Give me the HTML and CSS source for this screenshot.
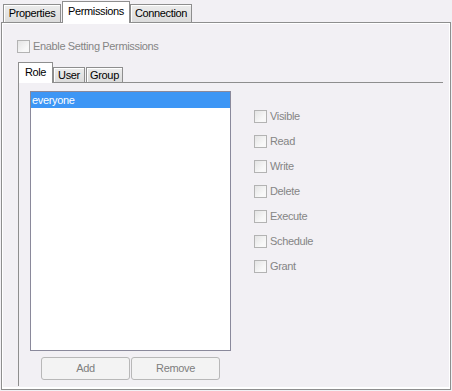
FILE: index.html
```html
<!DOCTYPE html>
<html>
<head>
<meta charset="utf-8">
<link rel="stylesheet" href="styles.css">
</head>
<body>
<div class="window">
  <div class="tabs">
    <div class="tab tab-properties">Properties</div>
    <div class="tab tab-permissions active">Permissions</div>
    <div class="tab tab-connection">Connection</div>
  </div>
  <div class="panel">
    <div class="check enable"><span class="box"></span><span class="label">Enable Setting Permissions</span></div>
    <div class="subtabs">
      <div class="subtab subtab-role active">Role</div>
      <div class="subtab subtab-user">User</div>
      <div class="subtab subtab-group">Group</div>
    </div>
    <div class="subpanel">
      <div class="left">
        <div class="list">
          <div class="item selected">everyone</div>
        </div>
        <div class="buttons">
          <div class="btn">Add</div>
          <div class="btn">Remove</div>
        </div>
      </div>
      <div class="perms">
        <div class="check"><span class="box"></span><span class="label">Visible</span></div>
        <div class="check"><span class="box"></span><span class="label">Read</span></div>
        <div class="check"><span class="box"></span><span class="label">Write</span></div>
        <div class="check"><span class="box"></span><span class="label">Delete</span></div>
        <div class="check"><span class="box"></span><span class="label">Execute</span></div>
        <div class="check"><span class="box"></span><span class="label">Schedule</span></div>
        <div class="check"><span class="box"></span><span class="label">Grant</span></div>
      </div>
    </div>
  </div>
</div>
</body>
</html>
```
FILE: styles.css
```css
html, body {
  margin: 0;
  padding: 0;
}
body {
  width: 452px;
  height: 391px;
  overflow: hidden;
  background: #f2f0f4;
  font-family: "Liberation Sans", Arial, sans-serif;
  font-size: 11px;
  letter-spacing: -0.35px;
  color: #000;
}
.window {
  margin: 0 1px;
}
.tabs {
  display: flex;
  align-items: flex-end;
  height: 22px;
  padding-left: 2px;
}
.tab {
  box-sizing: border-box;
  height: 18px;
  line-height: 17px;
  border: 1px solid #8e8e8e;
  border-bottom: none;
  background: linear-gradient(#ececec, #dcdcdc);
  box-shadow: inset 1px 1px 0 #fff;
  text-align: center;
  white-space: nowrap;
}
.tab.active {
  position: relative;
  z-index: 1;
  height: 22px;
  line-height: 18px;
  margin-bottom: -1px;
  background: #fff;
  box-shadow: none;
}
.tab-properties { width: 58px; }
.tab-permissions { width: 68px; margin-left: 1px; }
.tab-connection { width: 62px; }

.panel {
  box-sizing: border-box;
  height: 368px;
  border: 1px solid #8e8e8e;
  box-shadow: inset 1px 1px 0 #fff, inset -1px -2px 0 #fff;
  display: flex;
  flex-direction: column;
}
.check {
  display: flex;
  align-items: center;
  height: 13px;
  line-height: 13px;
  color: #858585;
}
.box {
  box-sizing: border-box;
  width: 13px;
  height: 13px;
  border: 1px solid #b3b3b3;
  background: linear-gradient(135deg, #e4e4e4, #f8f8f8 70%);
  margin-right: 3px;
  flex: none;
}
.enable {
  margin: 17px 0 0 15px;
}
.subtabs {
  display: flex;
  align-items: flex-end;
  height: 20px;
  margin: 9px 0 0 16px;
}
.subtab {
  box-sizing: border-box;
  height: 15px;
  line-height: 14px;
  border: 1px solid #8e8e8e;
  border-bottom: none;
  background: linear-gradient(#ececec, #dcdcdc);
  box-shadow: inset 1px 1px 0 #fff;
  text-align: center;
  white-space: nowrap;
}
.subtab.active {
  position: relative;
  z-index: 1;
  height: 21px;
  line-height: 19px;
  margin-bottom: -1px;
  background: #fff;
  box-shadow: none;
}
.subtab-role { width: 35px; }
.subtab-user { width: 32px; }
.subtab-group { width: 37px; margin-left: 1px; }

.subpanel {
  flex: 1;
  display: flex;
  margin: 0 7px 3px 16px;
  padding: 8px 0 0 11px;
  border-top: 1px solid #8e8e8e;
  border-left: 1px solid #8e8e8e;
}
.left {
  width: 201px;
  display: flex;
  flex-direction: column;
}
.list {
  box-sizing: border-box;
  width: 201px;
  height: 260px;
  border: 1px solid #8a899b;
  background: #fff;
}
.item {
  height: 16px;
  line-height: 16px;
  padding-left: 1px;
}
.item.selected {
  background: #3d96f5;
  color: #fff;
}
.buttons {
  display: flex;
  gap: 1px;
  margin-top: 6px;
  padding-left: 11px;
}
.btn {
  box-sizing: border-box;
  width: 89px;
  height: 23px;
  line-height: 21px;
  border: 1px solid #b8b8b8;
  border-radius: 3px;
  background: #f3f3f3;
  color: #7e7e7e;
  text-align: center;
}
.perms {
  display: flex;
  flex-direction: column;
  gap: 12px;
  margin-left: 23px;
  padding-top: 19px;
}
```
